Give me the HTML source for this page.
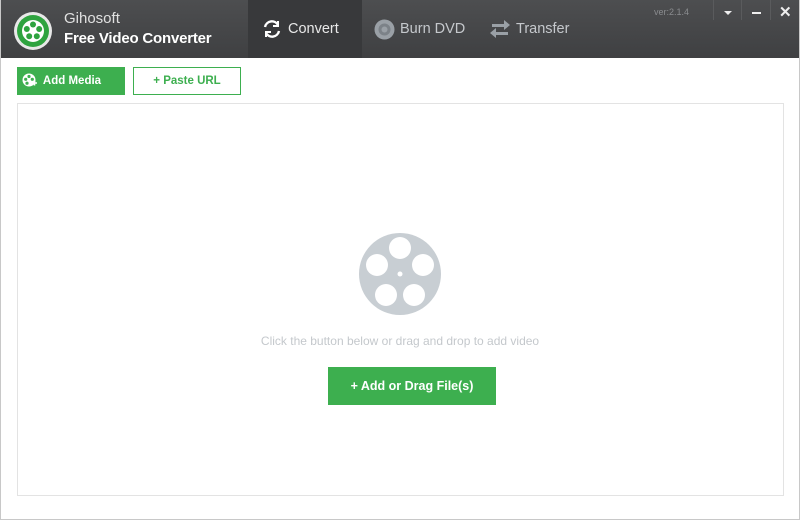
<!DOCTYPE html>
<html><head><style>
*{margin:0;padding:0;box-sizing:border-box}
body{width:800px;height:520px;background:#fff;font-family:"Liberation Sans",sans-serif;position:relative;overflow:hidden}
.hdr{position:absolute;left:0;top:0;width:800px;height:58px;background:linear-gradient(#4d4e50,#3f4042)}
.tab{position:absolute;top:0;height:58px;color:#e8e8e8;font-size:15px;display:flex;align-items:center}
.btn{position:absolute;font-size:12px;font-weight:bold;display:flex;align-items:center;justify-content:center}
</style></head><body>
<div class="hdr">
 <svg style="position:absolute;left:13px;top:11px" width="40" height="40" viewBox="0 0 40 40">
  <circle cx="20" cy="20" r="19" fill="#e8e8e8"/><circle cx="20" cy="20" r="16" fill="#2ea33f"/>
  <circle cx="20" cy="20" r="11" fill="#fff"/>
  <g fill="#2ea33f"><circle cx="20" cy="13.5" r="3"/><circle cx="13.8" cy="18" r="3"/><circle cx="26.2" cy="18" r="3"/><circle cx="16.2" cy="25.3" r="3"/><circle cx="23.8" cy="25.3" r="3"/></g>
 </svg>
 <div style="position:absolute;left:64px;top:10px;color:#e0e0e0;font-size:15px">Gihosoft</div>
 <div style="position:absolute;left:64px;top:30px;color:#fff;font-size:15px;font-weight:bold;letter-spacing:-0.2px">Free Video Converter</div>
 <div class="tab" style="left:248px;width:114px;background:#38393b;padding-left:13px">
  <svg width="22" height="22" viewBox="0 0 22 22" fill="none" stroke="#fff" stroke-width="2.4"><path d="M4 9a7 7 0 0 1 13-2"/><path d="M18 13a7 7 0 0 1-13 2"/><path d="M17 3v5h-5" stroke-width="2"/><path d="M5 19v-5h5" stroke-width="2"/></svg>
  <span style="margin-left:5px;font-size:14.5px">Convert</span></div>
 <div class="tab" style="left:374px;color:#c5c8cc">
  <svg width="21" height="21" viewBox="0 0 21 21"><circle cx="10.5" cy="10.5" r="10" fill="#9aa0a6"/><circle cx="10.5" cy="10.5" r="6" fill="#7c8288"/><circle cx="10.5" cy="10.5" r="3" fill="#9aa0a6"/></svg>
  <span style="margin-left:5px;font-size:14.5px">Burn DVD</span></div>
 <div class="tab" style="left:489px;color:#c5c8cc">
  <svg width="22" height="20" viewBox="0 0 22 20" fill="#9aa0a6"><path d="M3 6h12V2l6 5-6 5V9H3z" transform="translate(0,-1)"/><path d="M19 14H7v-4l-6 5 6 5v-3h12z" transform="translate(0,-1)"/></svg>
  <span style="margin-left:5px;font-size:14.5px">Transfer</span></div>
 <div style="position:absolute;left:654px;top:7px;color:#8a8c8f;font-size:9px">ver:2.1.4</div>
 <div style="position:absolute;left:713px;top:0;width:1px;height:20px;background:#5a5b5d"></div>
 <div style="position:absolute;left:741px;top:0;width:1px;height:20px;background:#5a5b5d"></div>
 <div style="position:absolute;left:770px;top:0;width:1px;height:20px;background:#5a5b5d"></div>
 <div style="position:absolute;left:724px;top:11px;border-left:4px solid transparent;border-right:4px solid transparent;border-top:4px solid #eee"></div>
 <div style="position:absolute;left:752px;top:12px;width:9px;height:2px;background:#eee"></div>
 <div style="position:absolute;left:779px;top:3px;color:#eee;font-size:15px;font-weight:bold">✕</div>
</div>
<div class="btn" style="left:17px;top:67px;width:108px;height:28px;background:#3daf4f;color:#fff;font-size:11.5px">
 <svg style="position:absolute;left:5px;top:6px" width="15" height="15" viewBox="0 0 15 15"><circle cx="7" cy="7" r="6.5" fill="#fff"/><g fill="#3daf4f"><circle cx="7" cy="3.5" r="1.6"/><circle cx="3.7" cy="6.3" r="1.6"/><circle cx="10.3" cy="6.3" r="1.6"/><circle cx="5" cy="10.2" r="1.6"/></g><path d="M10 10h5M12.5 7.5v5" stroke="#fff" stroke-width="1.6"/></svg>
 <span style="margin-left:2px">Add Media</span></div>
<div class="btn" style="left:133px;top:67px;width:108px;height:28px;border:1px solid #3daf4f;color:#3daf4f;font-size:11.5px">+ Paste URL</div>
<div style="position:absolute;left:17px;top:103px;width:767px;height:393px;border:1px solid #e3e3e3"></div>
<svg style="position:absolute;left:358px;top:232px" width="84" height="84" viewBox="0 0 84 84">
 <circle cx="42" cy="42" r="41" fill="#c8ced3"/>
 <g fill="#fff"><circle cx="42" cy="16" r="11"/><circle cx="19" cy="33" r="11"/><circle cx="65" cy="33" r="11"/><circle cx="28" cy="63" r="11"/><circle cx="56" cy="63" r="11"/><circle cx="42" cy="42" r="2.5"/></g>
</svg>
<div style="position:absolute;left:0;width:800px;top:334px;text-align:center;color:#c4c8cc;font-size:12px">Click the button below or drag and drop to add video</div>
<div class="btn" style="left:328px;top:367px;width:168px;height:38px;background:#3daf4f;color:#fff;font-size:12.5px">+ Add or Drag File(s)</div>
<div style="position:absolute;left:0;top:0;width:800px;height:520px;border:1px solid #c8c8c8;border-top:none;pointer-events:none"></div>
</body></html>
